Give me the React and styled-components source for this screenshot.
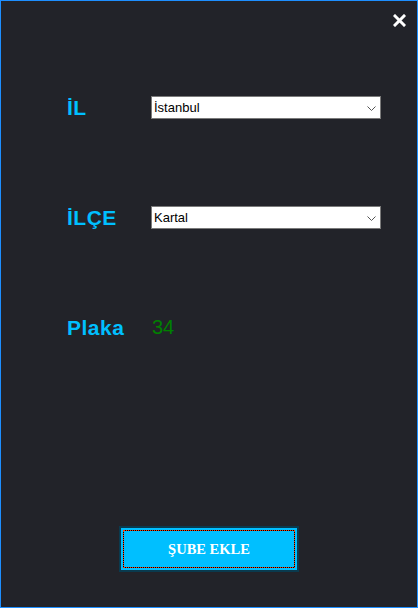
import styled, { createGlobalStyle } from "styled-components";

const GlobalStyle = createGlobalStyle`
  body {
    margin: 0;
    background: #222329;
    font-family: "Liberation Sans", Arial, sans-serif;
  }
`;

const Window = styled.div`
  width: 418px;
  height: 608px;
  box-sizing: border-box;
  border: 1px solid #1e8fff;
  background: #222329;
  display: flex;
  flex-direction: column;
`;

const TitleBar = styled.div`
  height: 95px;
  box-sizing: border-box;
  display: flex;
  justify-content: flex-end;
  align-items: flex-start;
  padding: 13px 11px 0 0;
`;

const CloseButton = styled.button`
  width: 13px;
  height: 13px;
  padding: 0;
  border: none;
  background: transparent;
  display: flex;
  cursor: pointer;
`;

const Form = styled.div`
  display: flex;
  flex-direction: column;
  padding: 0 36px 0 66px;
`;

const Row = styled.div`
  display: flex;
  align-items: center;
  height: 23px;
  margin-top: ${(p) => p.$gap || 0}px;
`;

const Label = styled.span`
  width: 84px;
  flex-shrink: 0;
  color: #00bfff;
  font-size: 21px;
  letter-spacing: 0.5px;
  font-weight: bold;
  line-height: 23px;
`;

const Value = styled.span`
  padding-left: 1px;
  color: #008000;
  font-size: 20px;
  line-height: 23px;
`;

const Combo = styled.div`
  position: relative;
  flex: 1;
  height: 23px;
`;

const Select = styled.select`
  appearance: none;
  width: 100%;
  height: 100%;
  box-sizing: border-box;
  border: 1px solid #7a7a7a;
  border-radius: 0;
  background: #fff;
  color: #000;
  font-family: "Liberation Sans", Arial, sans-serif;
  font-size: 13px;
  padding: 0 0 0 2px;
  outline: none;
`;

const Chevron = styled.svg`
  position: absolute;
  right: 5px;
  top: 10px;
  pointer-events: none;
`;

const Footer = styled.div`
  display: flex;
  justify-content: center;
  margin-top: 187px;
`;

const SubmitButton = styled.button`
  width: 180px;
  height: 46px;
  box-sizing: border-box;
  border: 2px solid #0a3a4e;
  padding: 2px;
  background: #00bfff;
  display: flex;
  cursor: pointer;
`;

const FocusBox = styled.span`
  flex: 1;
  border: 1px dotted #ff3a00;
  background: #000;
  box-shadow: inset 0 0 0 200px #00bfff;
  display: flex;
  align-items: center;
  justify-content: center;
  color: #fff;
  font-family: "Liberation Serif", "Times New Roman", serif;
  font-weight: bold;
  font-size: 14.5px;
`;

const ComboBox = ({ value, options }) => (
  <Combo>
    <Select defaultValue={value}>
      {options.map((o) => (
        <option key={o}>{o}</option>
      ))}
    </Select>
    <Chevron width="9" height="5" viewBox="0 0 9 5">
      <path d="M0.5 0.5 L4.5 4.5 L8.5 0.5" fill="none" stroke="#555" strokeWidth="1" />
    </Chevron>
  </Combo>
);

const App = () => {
  return (
    <>
      <GlobalStyle />
      <Window>
        <TitleBar>
          <CloseButton aria-label="Kapat">
            <svg width="13" height="13" viewBox="0 0 13 13">
              <path d="M2 2 L11 11 M11 2 L2 11" stroke="#fff" strokeWidth="3" strokeLinecap="square" />
            </svg>
          </CloseButton>
        </TitleBar>
        <Form>
          <Row>
            <Label>İL</Label>
            <ComboBox value="İstanbul" options={["İstanbul", "Ankara", "İzmir"]} />
          </Row>
          <Row $gap={87}>
            <Label>İLÇE</Label>
            <ComboBox value="Kartal" options={["Kartal", "Kadıköy", "Pendik"]} />
          </Row>
          <Row $gap={87}>
            <Label>Plaka</Label>
            <Value>34</Value>
          </Row>
        </Form>
        <Footer>
          <SubmitButton>
            <FocusBox>ŞUBE EKLE</FocusBox>
          </SubmitButton>
        </Footer>
      </Window>
    </>
  );
};

export default App;
